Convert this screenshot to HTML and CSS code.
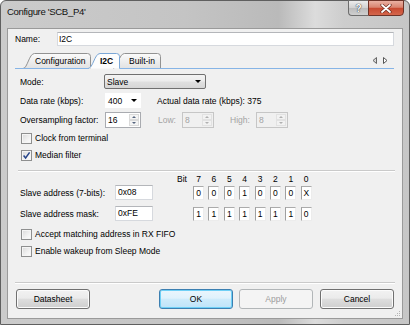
FILE: index.html
```html
<!DOCTYPE html>
<html>
<head>
<meta charset="utf-8">
<link rel="stylesheet" href="styles.css">
</head>
<body>
<div class="window">
  <div class="titlebar">
    <span class="title">Configure 'SCB_P4'</span>
    <div class="caption">
      <div class="cbtn help">?</div>
      <div class="cbtn close">
        <svg width="12" height="9" viewBox="0 0 12 9"><path d="M2 1 L10 8 M10 1 L2 8" stroke="#6b2a1e" stroke-width="3.2" stroke-linecap="round"/><path d="M2 1 L10 8 M10 1 L2 8" stroke="#ffffff" stroke-width="1.8" stroke-linecap="round"/></svg>
      </div>
    </div>
  </div>
  <div class="client">
    <div class="name-row">
      <span class="name-lbl">Name:</span>
      <div class="textbox name-box">I2C</div>
    </div>
    <div class="tabstrip">
      <svg class="tabshapes" width="379" height="16" viewBox="0 0 379 16">
        <defs>
          <linearGradient id="tg" x1="0" y1="0" x2="0" y2="1">
            <stop offset="0" stop-color="#fbfbfb"/>
            <stop offset="1" stop-color="#e2e2e2"/>
          </linearGradient>
        </defs>
        <path d="M8 15.5 C12.5 15.5 14 0.5 19.5 0.5 L72.5 0.5 Q75.5 0.5 75.5 3.5 L75.5 15.5" fill="url(#tg)" stroke="#929292"/>
        <path d="M98 15.5 C102.5 15.5 104 0.5 109.5 0.5 L142.5 0.5 Q145.5 0.5 145.5 3.5 L145.5 15.5" fill="url(#tg)" stroke="#929292"/>
        <path d="M73 15.5 C78 15.5 79.5 0.5 85 0.5 L101.5 0.5 Q104.5 0.5 104.5 3.5 L104.5 15.5" fill="#fdfdfd" stroke="#7ba7d6"/>
        <path d="M0 15.5 H73 M104.5 15.5 H379" stroke="#86b4e6"/>
        <path d="M361.5 4.5 L358 7.5 L361.5 10.5 Z" fill="#d8d8d8" stroke="#666"/>
        <path d="M368.5 4.5 L372 7.5 L368.5 10.5 Z" fill="#fff" stroke="#555"/>
      </svg>
      <div class="tablabels">
        <span class="tab-l t-conf">Configuration</span>
        <span class="tab-l t-i2c">I2C</span>
        <span class="tab-l t-built">Built-in</span>
      </div>
    </div>
    <div class="panel">
      <div class="row r-mode">
        <span class="lbl w84">Mode:</span>
        <div class="combo"><span>Slave</span><i class="arrow"></i></div>
      </div>
      <div class="row r-rate">
        <span class="lbl w85">Data rate (kbps):</span>
        <div class="dd"><span>400</span><i class="arrow"></i></div>
        <span class="actual">Actual data rate (kbps): 375</span>
      </div>
      <div class="row r-over">
        <span class="lbl w85">Oversampling factor:</span>
        <div class="spin w36"><span class="spin-val">16</span><span class="spin-btns"><i class="up"></i><i class="down"></i></span></div>
        <span class="lbl dis low-lbl">Low:</span>
        <div class="spin dis w32"><span class="spin-val">8</span><span class="spin-btns"><i class="up"></i><i class="down"></i></span></div>
        <span class="lbl dis high-lbl">High:</span>
        <div class="spin dis w32"><span class="spin-val">8</span><span class="spin-btns"><i class="up"></i><i class="down"></i></span></div>
      </div>
      <div class="row r-cb r-clock">
        <span class="cb"></span><span class="cb-lbl">Clock from terminal</span>
      </div>
      <div class="row r-cb r-median">
        <span class="cb"><svg width="9" height="9" viewBox="0 0 9 9"><path d="M1.6 4.6 L3.6 7 L7.6 1.4" fill="none" stroke="#27458a" stroke-width="1.5"/></svg></span><span class="cb-lbl">Median filter</span>
      </div>
      <div class="sep"></div>
      <div class="row r-bithead">
        <span class="bit-spacer"></span><span class="bit-word">Bit</span>
        <div class="bits heads">
          <span>7</span><span>6</span><span>5</span><span>4</span><span>3</span><span>2</span><span>1</span><span>0</span>
        </div>
      </div>
      <div class="row r-addr">
        <span class="lbl w95">Slave address (7-bits):</span>
        <div class="textbox addr-box">0x08</div>
        <div class="bits boxes">
          <span class="bit">0</span><span class="bit">0</span><span class="bit">0</span><span class="bit">1</span><span class="bit">0</span><span class="bit">0</span><span class="bit">0</span><span class="bit">X</span>
        </div>
      </div>
      <div class="row r-mask">
        <span class="lbl w95">Slave address mask:</span>
        <div class="textbox addr-box">0xFE</div>
        <div class="bits boxes">
          <span class="bit">1</span><span class="bit">1</span><span class="bit">1</span><span class="bit">1</span><span class="bit">1</span><span class="bit">1</span><span class="bit">1</span><span class="bit">0</span>
        </div>
      </div>
      <div class="row r-cb r-accept">
        <span class="cb"></span><span class="cb-lbl">Accept matching address in RX FIFO</span>
      </div>
      <div class="row r-cb r-wake">
        <span class="cb"></span><span class="cb-lbl">Enable wakeup from Sleep Mode</span>
      </div>
    </div>
    <div class="footer">
      <div class="footer-sep"></div>
      <div class="buttons">
        <div class="btn datasheet">Datasheet</div>
        <div class="btn ok">OK</div>
        <div class="btn apply">Apply</div>
        <div class="btn cancel">Cancel</div>
      </div>
    </div>
    <svg class="grip" width="6" height="6" viewBox="0 0 6 6">
      <rect x="4" y="0" width="1" height="1" fill="#b5b5b5"/>
      <rect x="2" y="2" width="1" height="1" fill="#b5b5b5"/>
      <rect x="4" y="2" width="1" height="1" fill="#b5b5b5"/>
      <rect x="0" y="4" width="1" height="1" fill="#b5b5b5"/>
      <rect x="2" y="4" width="1" height="1" fill="#b5b5b5"/>
      <rect x="4" y="4" width="1" height="1" fill="#b5b5b5"/>
    </svg>
  </div>
</div>
</body>
</html>
```

FILE: styles.css
```css
* { box-sizing: border-box; }
html, body { margin: 0; padding: 0; }
body {
  width: 410px;
  height: 325px;
  overflow: hidden;
  background: #ffffff;
  font-family: "Liberation Sans", Arial, sans-serif;
  font-size: 8.5px;
  color: #000;
}
.window {
  width: 410px;
  height: 325px;
  border: 1px solid #5f5f5f;
  border-radius: 6px 6px 0 0;
  background: linear-gradient(90deg, #cbcbcb 0%, #c4c4c4 45%, #bababa 68%, #dcdcdc 77%, #cdcdcd 84%, #c6c6c6 100%);
  display: flex;
  flex-direction: column;
  padding: 0 6px 5px 6px;
}
.titlebar {
  flex: none;
  height: 27px;
  display: flex;
  align-items: flex-start;
  justify-content: space-between;
}
.title {
  margin-top: 5px;
  font-size: 9.6px;
  letter-spacing: -0.35px;
  line-height: 12px;
  color: #111;
}
.caption {
  display: flex;
  margin-top: -1px;
  margin-right: -1px;
}
.cbtn {
  height: 16px;
  display: flex;
  align-items: center;
  justify-content: center;
}
.help {
  width: 20px;
  border: 1px solid #6d6d6d;
  border-right: none;
  border-radius: 0 0 0 4px;
  background: linear-gradient(#ececec 0%, #d2d2d2 48%, #bcbcbc 52%, #cfcfcf 100%);
  color: #fff;
  font-weight: bold;
  font-size: 10px;
  text-shadow: 0 0 1px #333, 0 0 1px #333;
}
.close {
  width: 36px;
  border: 1px solid #6e3328;
  border-radius: 0 0 4px 0;
  background: linear-gradient(#eab1a3 0%, #d98470 45%, #c84a31 52%, #d4664c 100%);
}
.client {
  flex: 1;
  position: relative;
  background: #f0f0f0;
  border: 1px solid #9a9a9a;
  display: flex;
  flex-direction: column;
  padding: 3px 8px 0 7px;
}
.name-row {
  flex: none;
  display: flex;
  align-items: center;
  height: 14px;
}
.name-lbl { width: 42px; }
.textbox {
  background: #fff;
  border: 1px solid #d6d9de;
  border-top-color: #b4b6ba;
  height: 14px;
  line-height: 12px;
  padding-left: 1px;
}
.name-box { flex: 1; }

.tabstrip {
  flex: none;
  margin-top: 7px;
  height: 16px;
  display: grid;
}
.tabshapes, .tablabels { grid-area: 1 / 1; }
.tablabels {
  display: flex;
  align-items: center;
  height: 15px;
}
.tab-l { line-height: 10px; }
.t-conf { margin-left: 20px; width: 65px; }
.t-i2c { width: 29px; font-weight: bold; }
.t-built { width: 40px; }

.panel {
  flex: 1;
  display: flex;
  flex-direction: column;
  padding: 5px 0 0 5px;
}
.row {
  display: flex;
  align-items: center;
  flex: none;
}
.lbl { flex: none; }
.w84 { width: 84px; }
.w85 { width: 85px; }
.w95 { width: 95px; }
.dis { color: #a3a3a3; }

.r-mode { height: 15px; }
.combo {
  width: 102px;
  height: 15px;
  border: 1px solid #707070;
  border-radius: 2px;
  background: linear-gradient(#f3f3f3 0%, #ececec 48%, #e0e0e0 52%, #d6d6d6 100%);
  display: flex;
  align-items: center;
  justify-content: space-between;
  padding: 0 4px 0 2px;
}
.arrow {
  width: 0;
  height: 0;
  border-left: 3px solid transparent;
  border-right: 3px solid transparent;
  border-top: 3px solid #000;
}
.r-rate { height: 15px; margin-top: 4px; }
.dd {
  width: 36px;
  height: 15px;
  background: #fff;
  display: flex;
  align-items: center;
  justify-content: space-between;
  padding: 0 4px 0 3px;
}
.actual { margin-left: 16px; }

.r-over { height: 16px; margin-top: 4px; }
.spin {
  height: 16px;
  background: #fff;
  border: 1px solid #a9abb0;
  display: flex;
}
.w36 { width: 36px; }
.w32 { width: 32px; }
.spin-val { flex: 1; padding-left: 2px; line-height: 14px; }
.spin-btns {
  width: 11px;
  display: flex;
  flex-direction: column;
  padding: 1px 1px 1px 0;
  gap: 0;
}
.spin-btns i {
  flex: 1;
  border: 1px solid #dadada;
  background: #f4f4f4;
  display: flex;
  align-items: center;
  justify-content: center;
}
.spin-btns i::after {
  content: "";
  width: 0;
  height: 0;
  border-left: 2px solid transparent;
  border-right: 2px solid transparent;
}
.spin-btns .up::after { border-bottom: 2px solid #56657f; }
.spin-btns .down::after { border-top: 2px solid #56657f; }
.spin.dis {
  background: #f0f0f0;
  border-color: #c6c6c6;
}
.spin.dis .spin-btns i { border-color: #e2e2e2; background: #f2f2f2; }
.spin.dis .spin-btns .up::after { border-bottom-color: #b0b0b0; }
.spin.dis .spin-btns .down::after { border-top-color: #b0b0b0; }
.low-lbl { margin-left: 17px; width: 24px; }
.high-lbl { margin-left: 16px; width: 26px; }

.r-cb { height: 14px; }
.r-clock { margin-top: 3px; }
.r-median { margin-top: 3px; }
.cb {
  width: 11px;
  height: 11px;
  margin-left: 1px;
  border: 1px solid #8e8f8f;
  background: linear-gradient(135deg, #d9d9d9 0%, #f2f2f2 60%, #fdfdfd 100%);
  box-shadow: inset 0 0 0 1px #f5f5f5;
  display: flex;
  align-items: center;
  justify-content: center;
}
.cb-lbl { margin-left: 3px; }

.sep {
  flex: none;
  height: 2px;
  margin: 8px -1px 0 -2px;
  border-top: 1px solid #cacaca;
  border-bottom: 1px solid #ffffff;
}
.r-bithead { height: 10px; margin-top: 2px; }
.bit-spacer { width: 157px; flex: none; }
.bit-word { width: 16px; flex: none; }
.bits {
  display: flex;
  gap: 4.4px;
}
.heads span {
  width: 11px;
  text-align: center;
  line-height: 10px;
}
.r-addr { height: 15px; margin-top: 1px; }
.r-mask { height: 15px; margin-top: 6px; }
.addr-box {
  width: 38px;
  height: 15px;
  line-height: 13px;
  padding-left: 2px;
  margin-right: 40px;
}
.bit {
  width: 11px;
  height: 14px;
  background: #fff;
  border-top: 1px solid #ababab;
  border-left: 1px solid #a0a0a0;
  border-right: 1px solid #ececec;
  border-bottom: 1px solid #ececec;
  text-align: center;
  line-height: 12px;
}
.r-accept { margin-top: 6px; }
.r-wake { margin-top: 3px; }

.footer {
  flex: none;
  padding-bottom: 9px;
}
.footer-sep {
  height: 2px;
  margin: 0 -1px 5px 0;
  border-top: 1px solid #cacaca;
  border-bottom: 1px solid #ffffff;
}
.buttons {
  display: flex;
  height: 20px;
}
.btn {
  width: 74px;
  height: 20px;
  display: flex;
  align-items: center;
  justify-content: center;
  border: 1px solid #707070;
  border-radius: 3px;
  background: linear-gradient(#f2f2f2 0%, #ebebeb 45%, #dddddd 52%, #cfcfcf 100%);
  box-shadow: inset 0 0 0 1px #fbfbfb;
}
.datasheet { margin-left: 1px; }
.ok {
  margin-left: auto;
  border-color: #3c7fb1;
  background: linear-gradient(#eaf6fd 0%, #dff2fc 45%, #cdebfb 52%, #bfe3f8 100%);
  box-shadow: inset 0 0 0 1px #6fd0f6;
}
.apply {
  margin-left: 6px;
  border-color: #b2b6b8;
  background: #f4f4f4;
  box-shadow: none;
  color: #9c9c9c;
}
.cancel { margin-left: 7px; }
.grip {
  position: absolute;
  right: 1px;
  bottom: 1px;
}
```
